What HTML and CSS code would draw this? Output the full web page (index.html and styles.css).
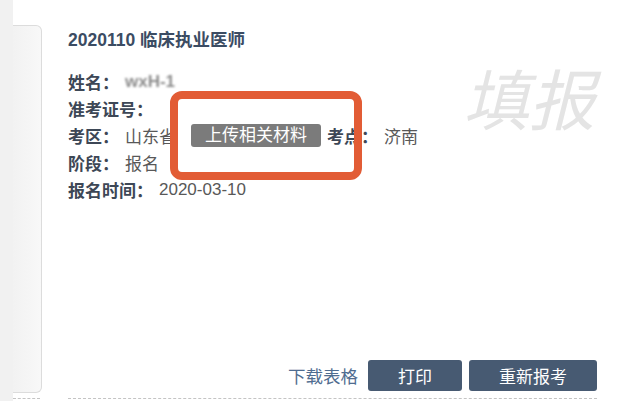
FILE: index.html
```html
<!DOCTYPE html>
<html lang="zh-CN">
<head>
<meta charset="utf-8">
<title>报考信息</title>
<link rel="stylesheet" href="styles.css">
</head>
<body>
<div class="page">
  <div class="strip"></div>
  <div class="prev">
    <div class="prev-card"></div>
    <div class="prev-dash"></div>
  </div>
  <div class="main">
    <h2 class="title">2020110 临床执业医师</h2>
    <div class="info">
      <div class="row"><span class="label">姓名：</span><span class="value blurred">wxH-1</span></div>
      <div class="row"><span class="label">准考证号：</span></div>
      <div class="row"><span class="label">考区：</span><span class="value">山东省</span><span class="upload">上传相关材料</span><span class="label second">考点：</span><span class="value">济南</span></div>
      <div class="row"><span class="label">阶段：</span><span class="value">报名</span></div>
      <div class="row"><span class="label">报名时间：</span><span class="value">2020-03-10</span></div>
    </div>
    <div class="actions">
      <a class="link">下载表格</a>
      <button class="btn">打印</button>
      <button class="btn">重新报考</button>
    </div>
  </div>
  <div class="stamp">填报</div>
  <div class="highlight"></div>
</div>
</body>
</html>
```
FILE: styles.css
```css
body {
  margin: 0;
  background: #fff;
  font-family: "Liberation Sans", "Noto Sans CJK SC", sans-serif;
}

.page {
  position: relative;
  display: flex;
  width: 618px;
  height: 401px;
  overflow: hidden;
}

.strip {
  flex: none;
  width: 13px;
  background: #f1f1f1;
}

.prev {
  flex: none;
  width: 29px;
  padding-top: 25px;
  box-sizing: border-box;
  display: flex;
  flex-direction: column;
}

.prev-card {
  height: 368px;
  background: linear-gradient(to right, #f2f2f2, #f8f8f8);
  border: 1px solid #dcdcdc;
  border-left: none;
  border-radius: 0 6px 6px 0;
  box-sizing: border-box;
}

.prev-dash {
  margin-top: 5px;
  width: 27px;
  border-top: 1px dashed #c4c4c4;
}

.main {
  flex: none;
  margin-left: 26px;
  width: 529px;
  height: 399px;
  box-sizing: border-box;
  padding-top: 30px;
  padding-bottom: 7px;
  border-bottom: 1px dashed #c4c4c4;
  display: flex;
  flex-direction: column;
}

.title {
  margin: 0;
  font-size: 17.5px;
  font-weight: 700;
  line-height: 20px;
  color: #3b4c63;
}

.info {
  margin-top: 18px;
  font-size: 17px;
}

.row {
  display: flex;
  align-items: center;
  height: 27px;
  white-space: nowrap;
}

.label {
  font-weight: 700;
  color: #3d4756;
}

.label.second {
  margin-left: 6px;
}

.value {
  margin-left: 6px;
  color: #585858;
}

.blurred {
  color: #8c8c8c;
  font-weight: 700;
  filter: blur(1.2px);
}

.upload {
  margin-left: 15px;
  height: 23px;
  line-height: 23px;
  padding: 0 14px;
  border-radius: 3px;
  background: #7b7b7b;
  color: #fff;
  font-size: 17px;
}

.actions {
  margin-top: auto;
  display: flex;
  justify-content: flex-end;
  align-items: center;
  gap: 7px;
}

.link {
  margin-right: 3px;
  color: #4f6c90;
  font-size: 17.5px;
}

.btn {
  height: 31px;
  padding: 0 30px;
  border: none;
  border-radius: 3px;
  background: #475a72;
  color: #fff;
  font-family: inherit;
  font-size: 17px;
}

.stamp {
  position: absolute;
  left: 463px;
  top: 63px;
  font-size: 66px;
  line-height: 1.2;
  font-style: italic;
  color: #e4e4e4;
}

.highlight {
  position: absolute;
  left: 170px;
  top: 91px;
  width: 192px;
  height: 89px;
  box-sizing: border-box;
  border: 8px solid #e25c35;
  border-radius: 12px;
}
```
